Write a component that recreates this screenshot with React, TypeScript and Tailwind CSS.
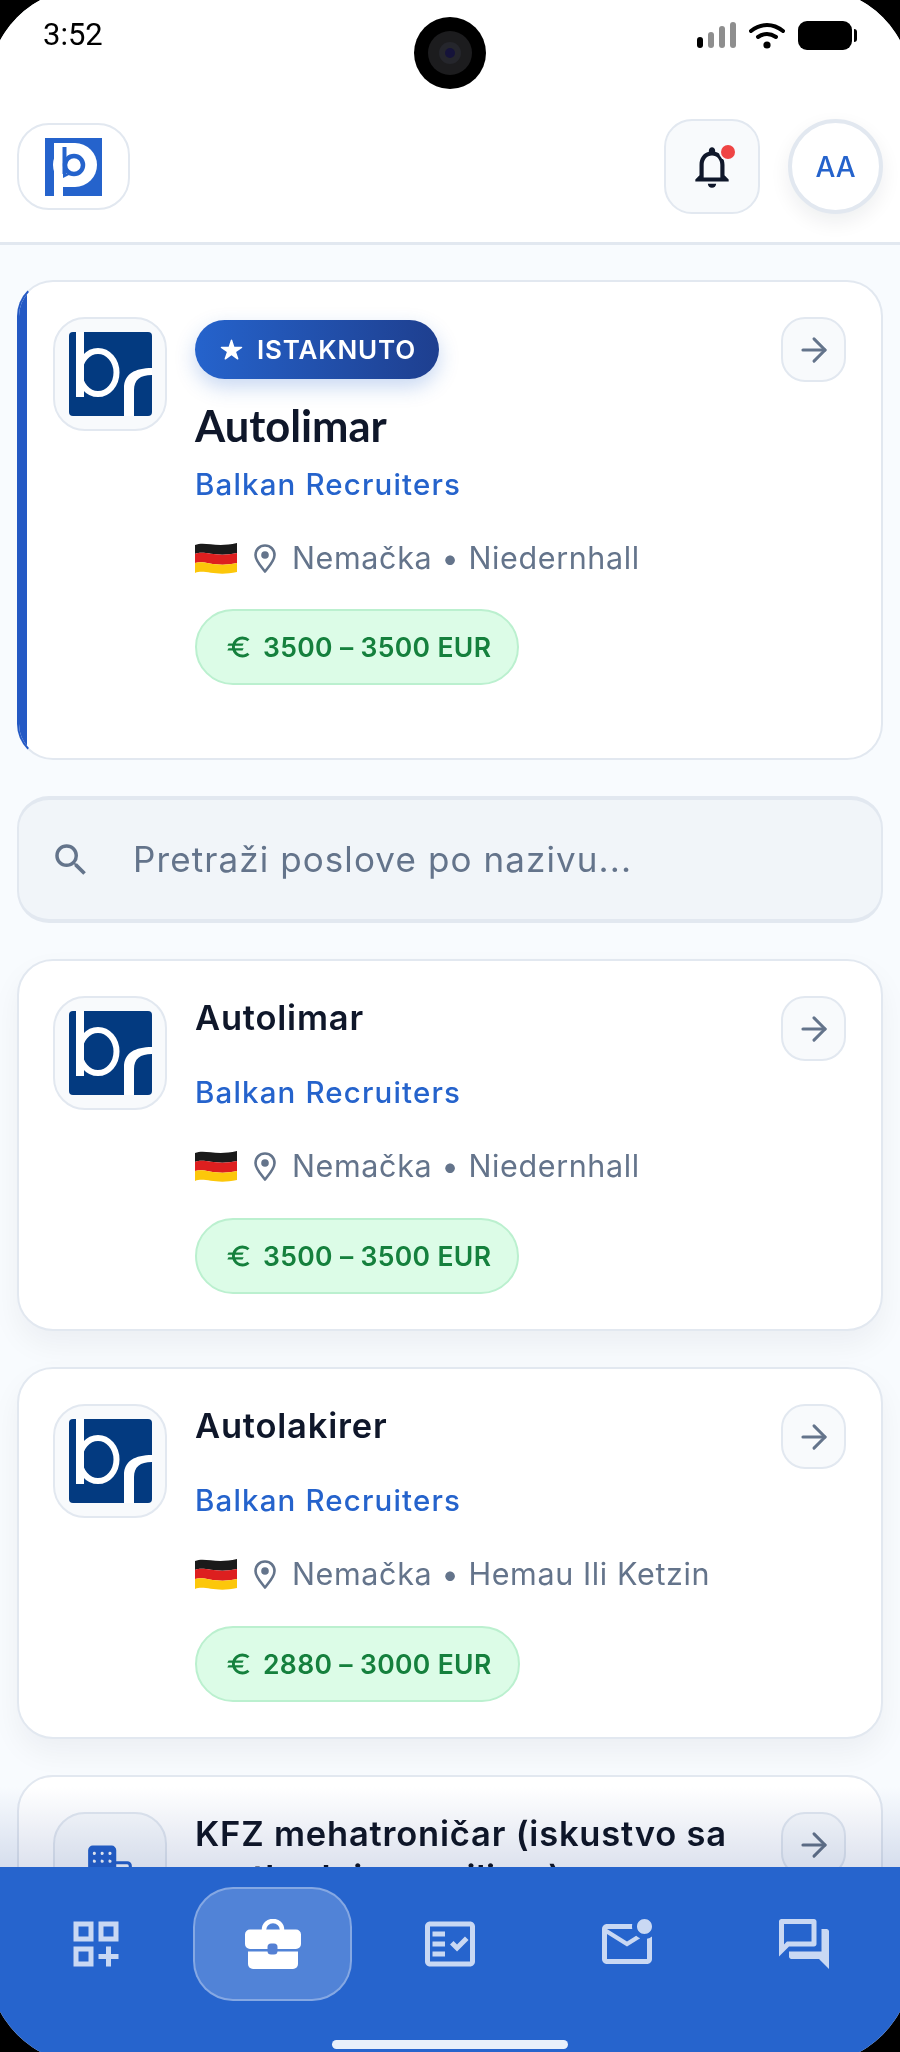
import React from "react";
import { IoBusiness, IoStar } from "react-icons/io5";
import { MdEuro, MdOutlineDashboardCustomize, MdOutlineFactCheck, MdOutlineMarkEmailUnread, MdOutlineNotifications, MdOutlineQuestionAnswer, MdSearch } from "react-icons/md";
import { ArrowRight } from "lucide-react";

const inter = "font-['Inter',sans-serif]";

function BrLogo() {
  return (
    <svg viewBox="0 0 83 84" className="h-[84px] w-[83px]">
      <rect width="83" height="84" rx="4" fill="#033a80" />
      <path d="M7 0h8v65H7z" fill="#fff" />
      <ellipse cx="29" cy="40.500" rx="18.500" ry="21.500" fill="none" stroke="#fff" strokeWidth="6" />
      <path d="M55 84V56C55 42 66 36 83 36V43C71 43 65 48 65 58V84Z" fill="#fff" />
    </svg>
  );
}

function PLogo() {
  return (
    <svg viewBox="0 0 57 58" className="h-[58px] w-[57px]">
      <rect width="57" height="58" fill="#2563cc" />
      <path d="M9 5h9v53H9z" fill="#fff" />
      <circle cx="30" cy="27" r="22" fill="#fff" />
      <path d="M18 5h12v44H18z" fill="#fff" />
      <circle cx="29" cy="27" r="9" fill="#fff" stroke="#2563cc" strokeWidth="4.500" />
      <path d="M17.500 9H21.500V36H17.500z" fill="#2563cc" />
      <path d="M18 36h8l-8 4z" fill="#2563cc" />
    </svg>
  );
}

function Flag() {
  return (
    <svg viewBox="0 0 42 32" className="h-[32px] w-[42px] shrink-0">
      <path d="M0 3c10-4 20 3 42-2v10C20 16 10 8 0 12z" fill="#1a1a1a" />
      <path d="M0 12c10-4 20 4 42-1v10C20 26 10 18 0 21z" fill="#dd1f1f" />
      <path d="M0 21c10-3 20 5 42 0v9C20 35 10 27 0 31z" fill="#fcc70a" />
    </svg>
  );
}

function Pin() {
  return (
    <svg viewBox="0 0 22 29" className="ml-[17px] mr-[16px] h-[29px] w-[22px] shrink-0" fill="none" stroke="currentColor" strokeWidth="2.600" strokeLinejoin="round">
      <path d="M11 1.500C5.500 1.500 1.500 5.700 1.500 11c0 6 6 12 9.500 16.500C14.500 23 20.500 17 20.500 11 20.500 5.700 16.500 1.500 11 1.500Z" />
      <circle cx="11" cy="11" r="3.800" fill="currentColor" stroke="none" />
    </svg>
  );
}

function Pill({ text, className }: { text: string; className: string }) {
  return (
    <div className={`inline-flex h-[76px] items-center rounded-full border-2 border-[#bbf0cf] bg-[#dcfce7] pl-[28px] pr-[26px] text-[#15803d] ${className}`}>
      <MdEuro size={28} className="mr-[10px]" />
      <span className="whitespace-nowrap text-[26.5px] font-semibold leading-none tracking-[0.35px]">{text}</span>
    </div>
  );
}

function Location({ city }: { city: string }) {
  return (
    <div className="mt-[32px] flex h-[44px] items-center text-[#64748b]">
      <Flag />
      <Pin />
      <span className="whitespace-nowrap text-[30.5px] leading-[44px] tracking-[0.62px]">Nemačka • {city}</span>
    </div>
  );
}

function ArrowButton() {
  return (
    <div className="flex h-[65px] w-[65px] shrink-0 items-center justify-center rounded-[24px] border-2 border-[#e2e8f0] bg-[#f8fafc] text-[#64748b]">
      <ArrowRight size={38} strokeWidth={1.9} />
    </div>
  );
}

function Tile({ children }: { children: React.ReactNode }) {
  return (
    <div className="flex h-[114px] w-[114px] shrink-0 items-center justify-center rounded-[32px] border-2 border-[#e2e8f0] bg-[#f8fafc]">
      {children}
    </div>
  );
}

function JobCard({ title, city, salary }: { title: string; city: string; salary: string }) {
  return (
    <div className="mb-[36px] flex gap-[28px] rounded-[36px] border-2 border-[#e2e8f0] bg-white pb-[35px] pl-[34px] pr-[35px] pt-[35px] shadow-[0_14px_30px_rgba(15,23,42,0.05)]">
      <Tile><BrLogo /></Tile>
      <div className="min-w-0 flex-1">
        <div className="text-[34.5px] font-semibold leading-[44px] tracking-[0.8px] text-[#0f172a]">{title}</div>
        <div className="mt-[32px] text-[29.5px] font-medium leading-[40px] tracking-[1.15px] text-[#2563cc]">Balkan Recruiters</div>
        <Location city={city} />
        <Pill text={salary} className="mt-[30px]" />
      </div>
      <ArrowButton />
    </div>
  );
}

function Bars() {
  return (
    <div className="flex h-[26px] items-end gap-[5px]">
      <div className="h-[11px] w-[6px] rounded-full bg-black" />
      <div className="h-[16px] w-[6px] rounded-full bg-[#8e8e8e]" />
      <div className="h-[22px] w-[6px] rounded-full bg-[#8e8e8e]" />
      <div className="h-[26px] w-[6px] rounded-full bg-[#8e8e8e]" />
    </div>
  );
}

function Wifi() {
  return (
    <svg viewBox="0 0 36 27" className="h-[27px] w-[36px]">
      <path d="M2 9c10-8 22-8 32 0" fill="none" stroke="#000" strokeWidth="4" strokeLinecap="round" />
      <path d="M9 15c6-4 12-4 18 0" fill="none" stroke="#000" strokeWidth="4" strokeLinecap="round" />
      <circle cx="18" cy="23" r="3.600" fill="#000" />
    </svg>
  );
}

function Briefcase() {
  return (
    <svg viewBox="0 0 56 50" className="h-[50px] w-[56px]">
      <path d="M19 12V10.500a9 8.500 0 0 1 18 0V12" fill="none" stroke="#fff" strokeWidth="4.500" />
      <path d="M5 10.500H51a5 5 0 0 1 5 5V25a5 5 0 0 1-5 5H5a5 5 0 0 1-5-5V15.500a5 5 0 0 1 5-5Z" fill="#fff" />
      <path d="M3 32.500H53V45a5 5 0 0 1-5 5H8a5 5 0 0 1-5-5Z" fill="#fff" />
      <rect x="22.500" y="24.500" width="10" height="11" rx="3.500" fill="#5480d4" />
    </svg>
  );
}

export default function App() {
  return (
    <div className="h-[2052px] w-[900px] overflow-hidden bg-black">
      <div className="-m-[12px] h-[2076px] w-[924px] overflow-hidden rounded-[100px] p-[12px]">
        <div className={`relative flex h-[2052px] w-[900px] flex-col bg-[#f8fbfe] ${inter}`}>
          <header className="relative h-[245px] shrink-0 border-b-[3px] border-[#e2e8f0] bg-white">
            <div className="flex items-center justify-between pl-[43px] pr-[43px] pt-[20px]">
              <span className="font-['Roboto',sans-serif] text-[31px] leading-[30px] text-black">3:52</span>
              <div className="flex items-center gap-[13px]">
                <Bars />
                <Wifi />
                <div className="flex items-center gap-[2px]">
                  <div className="h-[29px] w-[54px] rounded-[9px] bg-black" />
                  <div className="h-[13px] w-[3px] rounded-r-full bg-black" />
                </div>
              </div>
            </div>
            <div className="absolute left-[414px] top-[17px] flex h-[72px] w-[72px] items-center justify-center rounded-full bg-black">
              <div className="flex h-[44px] w-[44px] items-center justify-center rounded-full bg-[#1c1c1e]">
                <div className="flex h-[22px] w-[22px] items-center justify-center rounded-full bg-[#25262c]">
                  <div className="h-[10px] w-[10px] rounded-full bg-[#15133a]" />
                </div>
              </div>
            </div>
            <div className="mt-[69px] flex items-center justify-between pl-[17px] pr-[17px]">
              <div className="flex h-[87px] w-[113px] items-center justify-center rounded-[32px] border-2 border-[#e2e8f0] bg-white">
                <PLogo />
              </div>
              <div className="flex items-center gap-[28px]">
                <div className="relative flex h-[95px] w-[96px] items-center justify-center rounded-[28px] border-2 border-[#e2e8f0] bg-[#f8fafc] text-[#0f172a]">
                  <MdOutlineNotifications size={50} />
                  <div className="absolute left-[55px] top-[24px] h-[14px] w-[14px] rounded-full bg-[#ef4444] ring-2 ring-[#f8fafc]" />
                </div>
                <div className="flex h-[95px] w-[95px] items-center justify-center rounded-full border-[4px] border-[#e2e8f0] bg-white text-[28px] font-medium text-[#2563cc] shadow-[0_8px_20px_rgba(15,23,42,0.07)]">
                  AA
                </div>
              </div>
            </div>
          </header>

          <main className="relative min-h-0 flex-1 overflow-hidden px-[17px] pt-[35px]">
            <div className="relative mb-[36px] flex gap-[28px] overflow-hidden rounded-[36px] border-2 border-[#e2e8f0] border-l-[#2459c4] bg-white pb-[73px] pl-[34px] pr-[35px] pt-[35px]">
              <div className="absolute bottom-0 left-0 top-0 w-[8px] bg-[#2459c4]" />
              <Tile><BrLogo /></Tile>
              <div className="min-w-0 flex-1">
                <div className="mt-[3px] inline-flex h-[59px] items-center rounded-full bg-gradient-to-r from-[#2563cc] to-[#1e3f8f] pl-[25px] pr-[23px] text-white shadow-[0_8px_20px_rgba(37,99,204,0.25)]">
                  <IoStar size={23} className="mr-[14px]" />
                  <span className="text-[26px] font-semibold leading-none tracking-[0.85px]">ISTAKNUTO</span>
                </div>
                <div className="mt-[22px] font-['Lato',sans-serif] text-[43.5px] font-bold leading-[48px] text-[#0f172a]">Autolimar</div>
                <div className="mt-[15px] text-[29.5px] font-medium leading-[40px] tracking-[1.15px] text-[#2563cc]">Balkan Recruiters</div>
                <Location city="Niedernhall" />
                <Pill text="3500 – 3500 EUR" className="mt-[29px]" />
              </div>
              <ArrowButton />
            </div>

            <div className="mb-[36px] flex h-[127px] items-center rounded-[32px] border-2 border-b-[4px] border-t-[4px] border-[#e2e8f0] bg-[#f1f5f9] pl-[31px] text-[#64748b]">
              <MdSearch size={42} className="shrink-0" />
              <span className="ml-[41px] text-[35px] tracking-[1.1px]">Pretraži poslove po nazivu...</span>
            </div>

            <JobCard title="Autolimar" city="Niedernhall" salary="3500 – 3500 EUR" />
            <JobCard title="Autolakirer" city="Hemau Ili Ketzin" salary="2880 – 3000 EUR" />

            <div className="flex gap-[28px] rounded-[36px] border-2 border-[#e2e8f0] bg-white pb-[34px] pl-[34px] pr-[35px] pt-[35px]">
              <Tile><IoBusiness size={50} className="text-[#2563cc]" /></Tile>
              <div className="min-w-0 flex-1">
                <div className="text-[34.5px] font-semibold leading-[44px] tracking-[0.8px] text-[#0f172a]">KFZ mehatroničar (iskustvo sa prethodnim vozilima)</div>
              </div>
              <ArrowButton />
            </div>

            <div className="pointer-events-none absolute bottom-0 left-0 right-0 h-[80px] bg-gradient-to-b from-white to-[#dde2ee] mix-blend-multiply" />
          </main>

          <nav className="relative grid h-[185px] shrink-0 grid-cols-5 items-start bg-[#2664cd] px-[7px] pt-[20px] text-[#c9d8f3]">
            <div className="flex h-[114px] items-center justify-center"><MdOutlineDashboardCustomize size={60} /></div>
            <div className="flex h-[114px] items-center justify-center">
              <div className="flex h-[114px] w-[159px] items-center justify-center rounded-[40px] border-2 border-white/30 bg-white/20"><Briefcase /></div>
            </div>
            <div className="flex h-[114px] items-center justify-center"><MdOutlineFactCheck size={60} /></div>
            <div className="flex h-[114px] items-center justify-center"><MdOutlineMarkEmailUnread size={60} /></div>
            <div className="flex h-[114px] items-center justify-center"><MdOutlineQuestionAnswer size={60} /></div>
            <div className="absolute bottom-[3px] left-[332px] h-[9px] w-[236px] rounded-full bg-[#e8f0fb]" />
          </nav>
        </div>
      </div>
    </div>
  );
}
